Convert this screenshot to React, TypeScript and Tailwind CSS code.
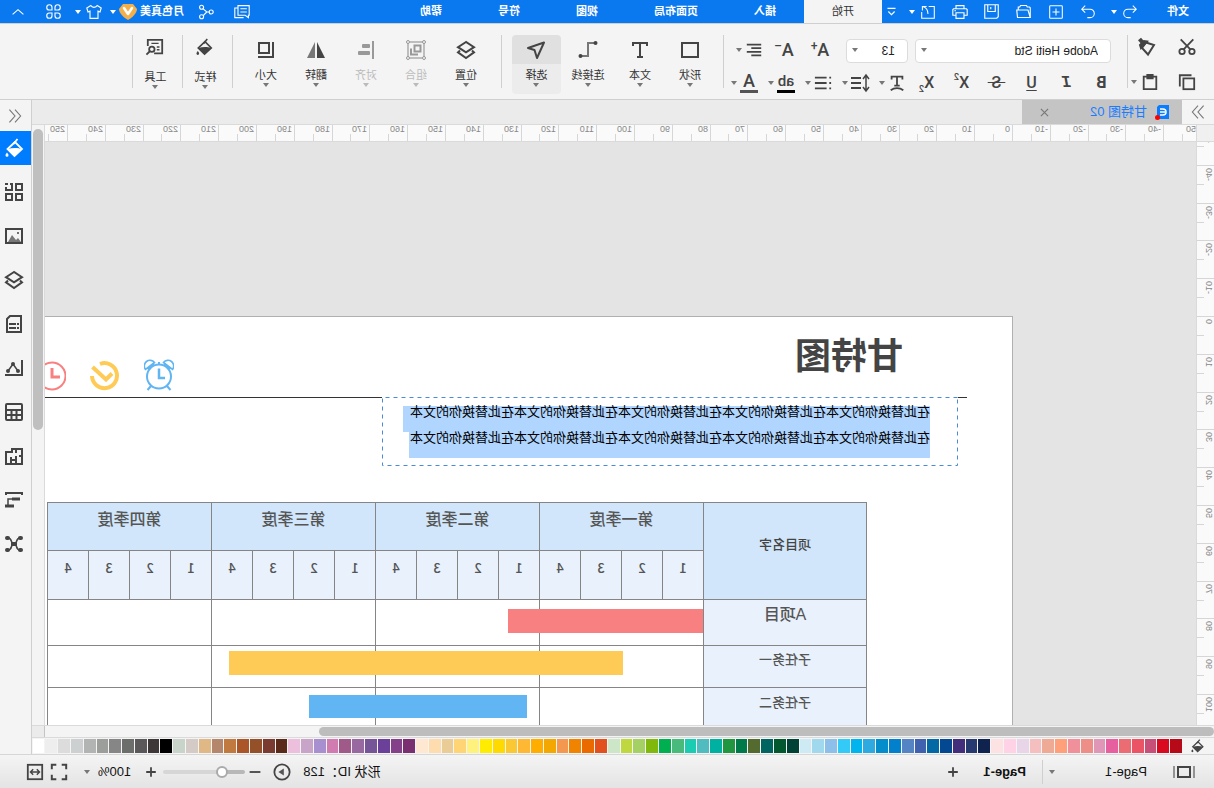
import type { ReactNode } from "react";

interface IconProps {
  size?: number;
  width?: number;
  className?: string;
  children?: ReactNode;
}

function Icon({ size = 20, width = 2, className = "", children }: IconProps) {
  return (
    <svg
      width={size}
      height={size}
      viewBox="0 0 20 20"
      fill="none"
      stroke="currentColor"
      strokeWidth={width}
      className={`shrink-0 ${className}`}
      aria-hidden="true"
    >
      {children}
    </svg>
  );
}

function Caret({ className = "text-[#777]" }: { className?: string }) {
  return (
    <svg width="6" height="4" viewBox="0 0 6 4" className={`shrink-0 ${className}`} aria-hidden="true">
      <path d="M0 0h6L3 4z" fill="currentColor" />
    </svg>
  );
}

function Divider() {
  return <div className="h-[53px] w-px shrink-0 bg-[#cfcfcf]" />;
}

function Bucket({ size = 20, className = "" }: { size?: number; className?: string }) {
  return (
    <Icon size={size} width={1.8} className={className}>
      <path d="M10 4 17.500 11 10.500 18 3 11z" />
      <path d="M3 11c4-1.500 10-1.500 14.500 0l-7 7z" fill="currentColor" stroke="none" />
      <path d="M11.500 6 7.500 1" />
      <path d="M18 14.500c1 1.400 1.500 2 1.500 2.800a1.500 1.500 0 0 1-3 0c0-.8.500-1.400 1.500-2.800z" fill="currentColor" stroke="none" />
    </Icon>
  );
}

function Layers({ size = 20 }: { size?: number }) {
  return (
    <Icon size={size}>
      <path d="M10 2 18 7.200l-8 5.200-8-5.200z" />
      <path d="M4 10.500 2 12.400 10 18l8-5.600-2-1.900" />
    </Icon>
  );
}

const MENU_TABS = ["开始", "插入", "页面布局", "视图", "符号", "帮助"];

function TitleBar() {
  const tool = "flex h-full w-8 items-center justify-center";
  return (
    <header className="flex h-6 shrink-0 border-b border-[#cfcfcf] bg-[#0a78ef] text-[11px] text-white">
      <button className="w-[68px] pl-[25px] text-left font-bold">文件</button>
      <button aria-label="撤销" className="flex w-[42px] items-center gap-[6px] pl-[9px]">
        <Icon size={14} width={1.5}>
          <path d="M6 1 1 6l5 5M1 6h12a6 6 0 0 1 0 12H9" />
        </Icon>
        <Caret className="text-white" />
      </button>
      <button aria-label="恢复" className={tool}>
        <Icon size={14} width={1.5}>
          <path d="M14 1l5 5-5 5M19 6H7a6 6 0 0 0 0 12h4" />
        </Icon>
      </button>
      <button aria-label="新建" className={tool}>
        <Icon size={14} width={1.5}>
          <rect x="1" y="1" width="18" height="18" rx="1" />
          <path d="M10 5v10M5 10h10" />
        </Icon>
      </button>
      <button aria-label="打开" className={tool}>
        <Icon size={15} width={1.5}>
          <path d="M1 18V5l1-1h3l1-2h8l1 2h2v4M1 18l3-10h15l-1 10z" />
        </Icon>
      </button>
      <button aria-label="保存" className={tool}>
        <Icon size={15} width={1.5}>
          <path d="M1 1h18v18H3l-2-2zM5 1v9h10V1M11 4v3" />
        </Icon>
      </button>
      <button aria-label="打印" className={tool}>
        <Icon size={16} width={1.4}>
          <path d="M5 6V2h10v4M5 14H1V7l1-1h16l1 1v7h-4M5 11h10v7H5zM15 8.500h2" />
        </Icon>
      </button>
      <button aria-label="导出" className="flex w-[42px] items-center gap-[6px] pl-[9px]">
        <Icon size={14} width={1.5}>
          <path d="M9 2H1v17h18v-9M12 2h6v6M18 2c-5 1-8 5-8 11" />
        </Icon>
        <Caret className="text-white" />
      </button>
      <button aria-label="自定义工具栏" className="flex w-5 items-center justify-center">
        <Icon size={9} width={2.5}>
          <path d="M1 3h18M3 10l7 7 7-7" />
        </Icon>
      </button>
      <nav className="flex">
        {MENU_TABS.map((tab, i) => (
          <button key={tab} className={i === 0 ? "bg-[#f4f4f4] px-7 text-[#333]" : "px-7 font-bold"}>
            {tab}
          </button>
        ))}
      </nav>
      <div className="ml-auto flex h-full">
        <button aria-label="反馈" className="flex w-9 items-center justify-center">
          <Icon size={16} width={1.4}>
            <path d="M1 2h14v12H6l-4 3v-3H1zM15 5h4v12H8M4 6h8M4 10h8" />
          </Icon>
        </button>
        <button aria-label="分享" className="flex w-9 items-center justify-center">
          <Icon size={16} width={1.4}>
            <circle cx="3.500" cy="10" r="2.500" />
            <circle cx="15.500" cy="4" r="2.500" />
            <circle cx="15.500" cy="16" r="2.500" />
            <path d="M6 10h3l4.500-4M9 10l4.500 4.500" />
          </Icon>
        </button>
        <button className="flex items-center gap-[3px] pl-1 font-bold">
          月色真美
          <svg width="18" height="17" viewBox="0 0 18 17" aria-hidden="true">
            <path d="M4 1h10l4 5c0 4-5 9-9 11C5 15 0 10 0 6z" fill="#f3b04a" />
            <path d="m5 5 4 6 4-6" fill="none" stroke="#fff" strokeWidth="2.500" strokeLinecap="round" strokeLinejoin="round" />
          </svg>
          <Caret className="text-white" />
        </button>
        <button aria-label="主题" className="flex items-center gap-[5px] pr-[3px] pl-2">
          <Icon size={16} width={1.4}>
            <path d="M6 2 1 5l1.500 5L5 9v9h10V9l2.500 1L19 5l-5-3c-1.500 3-6.500 3-8 0z" />
          </Icon>
          <Caret className="text-white" />
        </button>
        <button aria-label="应用" className="flex w-9 items-center justify-center">
          <Icon size={15} width={1.5}>
            <path d="M8 8H4.500A3.500 3.500 0 1 1 8 4.500zM12 8h3.500A3.500 3.500 0 1 0 12 4.500zM8 12H4.500A3.500 3.500 0 1 0 8 15.500zM12 12h3.500a3.500 3.500 0 1 1-3.500 3.500z" />
          </Icon>
        </button>
        <button aria-label="收起功能区" className="flex w-9 items-center justify-center">
          <Icon size={12} width={1.8}>
            <path d="m1 14 9-8 9 8" />
          </Icon>
        </button>
      </div>
    </header>
  );
}

interface BigButtonProps {
  label: string;
  className?: string;
  muted?: boolean;
  spread?: boolean;
  children: ReactNode;
}

function BigButton({ label, className = "w-[50px]", muted = false, spread = false, children }: BigButtonProps) {
  return (
    <button
      disabled={muted}
      className={`mt-[6px] flex h-[59px] shrink-0 flex-col items-center ${spread ? "gap-[13px] pt-[3px]" : "gap-[7px] pt-[5px]"} ${muted ? "text-[#999]" : "text-[#444]"} ${className}`}
    >
      {children}
      <span className="flex flex-col items-center">
        <span className={`text-[11px] leading-4 ${muted ? "text-[#bbb]" : "text-[#333]"}`}>{label}</span>
        <Caret className={muted ? "text-[#bbb]" : "text-[#777]"} />
      </span>
    </button>
  );
}

function CharButton({ label, children }: { label: string; children: ReactNode }) {
  return (
    <button
      aria-label={label}
      className="flex h-6 w-[35px] items-center justify-center font-['Roboto',sans-serif] text-base font-medium"
    >
      {children}
    </button>
  );
}

function DropButton({ label, children }: { label: string; children: ReactNode }) {
  return (
    <button aria-label={label} className="flex h-6 w-[37px] items-center">
      <span className="flex w-6 justify-center">{children}</span>
      <Caret />
    </button>
  );
}

function Ribbon() {
  const sizeButton = "flex w-9 justify-center font-['Roboto',sans-serif] text-lg leading-6 font-medium";
  return (
    <div className="flex h-[76px] shrink-0 items-center border-b border-[#cfcfcf] bg-[#f4f4f4] text-[#444]">
      <div className="mt-[6px] grid grid-cols-[54px_32px] gap-y-[11px]">
        <button aria-label="剪切" className="flex h-6 items-center justify-center">
          <Icon size={18}>
            <path d="M3 1.500 14 13M17 1.500 6 13" />
            <circle cx="4.500" cy="15" r="3" />
            <circle cx="15.500" cy="15" r="3" />
          </Icon>
        </button>
        <button aria-label="格式刷" className="flex h-6 items-center pl-[3px]">
          <Icon size={20}>
            <path d="m3 8 6 9.500 6-6.500-4-5.500z" />
            <path d="M10 4.500 16 11l1-3-4-4z" fill="currentColor" />
            <path d="m14 6 3.500-4" strokeWidth="4" />
          </Icon>
        </button>
        <button aria-label="复制" className="flex h-6 items-center justify-center">
          <Icon size={18}>
            <rect x="2" y="6" width="12" height="12" />
            <path d="M5 2.500h13V15" />
          </Icon>
        </button>
        <button aria-label="粘贴" className="flex h-6 items-center gap-1 pl-px">
          <Icon size={18}>
            <path d="M7 4H3v14h14V4h-4" />
            <path d="M7 2h6v4H7z" fill="currentColor" />
          </Icon>
          <Caret />
        </button>
      </div>
      <Divider />
      <div className="mt-[9px] ml-4 flex flex-col gap-2">
        <div className="flex items-center">
          <div className="relative mr-[7px] w-[196px]">
            <select
              aria-label="字体"
              className="h-6 w-full appearance-none rounded-sm border border-[#dcdcdc] bg-white px-3 text-xs text-[#222]"
            >
              <option>Adobe Heiti Std</option>
            </select>
            <span className="pointer-events-none absolute top-[10px] right-[6px] flex">
              <Caret />
            </span>
          </div>
          <div className="relative w-[62px]">
            <select
              aria-label="字号"
              className="h-6 w-full appearance-none rounded-sm border border-[#dcdcdc] bg-white px-3 text-xs text-[#222]"
            >
              <option>13</option>
            </select>
            <span className="pointer-events-none absolute top-[10px] right-[6px] flex">
              <Caret />
            </span>
          </div>
          <button aria-label="增大字号" className={`ml-2 ${sizeButton}`}>
            A<span className="text-xs leading-4">+</span>
          </button>
          <button aria-label="减小字号" className={sizeButton}>
            A<span className="text-xs leading-4">–</span>
          </button>
          <DropButton label="对齐方式">
            <Icon size={18} width={2}>
              <path d="M2 4h16M2 8h11M2 12h16M2 16h11" />
            </Icon>
          </DropButton>
        </div>
        <div className="-ml-2 flex items-center">
          <CharButton label="加粗">
            <span className="font-bold">B</span>
          </CharButton>
          <CharButton label="斜体">
            <span className="font-['Liberation_Mono'] font-bold italic">I</span>
          </CharButton>
          <CharButton label="下划线">
            <span className="underline underline-offset-2">U</span>
          </CharButton>
          <CharButton label="删除线">
            <span className="line-through">&nbsp;S&nbsp;</span>
          </CharButton>
          <CharButton label="上标">
            X<span className="self-start text-[9px] leading-3">2</span>
          </CharButton>
          <CharButton label="下标">
            X<span className="self-end text-[9px] leading-3">2</span>
          </CharButton>
          <DropButton label="文字样式">
            <Icon size={18}>
              <path d="M4 6V3h12v3M10 3v10M7 13h6" />
              <path d="M3 18c4-3 10-3 14 0" />
            </Icon>
          </DropButton>
          <DropButton label="行距">
            <Icon size={20}>
              <path d="M9 5h10M9 10h10M9 15h10" />
              <path d="M4 3v14M1 6l3-4 3 4M1 14l3 4 3-4" strokeWidth="1.500" />
            </Icon>
          </DropButton>
          <DropButton label="项目符号">
            <Icon size={18}>
              <path d="M6 4h13M6 10h13M6 16h13" />
              <path d="M1 4h2M1 10h2M1 16h2" />
            </Icon>
          </DropButton>
          <DropButton label="突出显示">
            <span className="h-[21px] w-[18px] border-b-[3px] border-black text-center font-['Roboto',sans-serif] text-[15px] leading-[18px] font-medium">
              ab
            </span>
          </DropButton>
          <DropButton label="字体颜色">
            <span className="h-[21px] w-[18px] border-b-[3px] border-[#555] text-center font-['Roboto',sans-serif] text-lg leading-[18px] font-medium">
              A
            </span>
          </DropButton>
        </div>
      </div>
      <Divider />
      <div className="ml-2 flex">
        <BigButton label="形状">
          <Icon>
            <rect x="2" y="3" width="16" height="14" />
          </Icon>
        </BigButton>
        <BigButton label="文本">
          <Icon>
            <path d="M3 6V3h14v3M10 3v15M7 17h6" />
          </Icon>
        </BigButton>
        <BigButton label="连接线" className="w-[54px]">
          <Icon>
            <path d="M2 3h8v13h6" stroke="#777" />
            <circle cx="2.500" cy="3" r="2" fill="currentColor" stroke="none" />
            <circle cx="17.500" cy="16" r="2" fill="currentColor" stroke="none" />
          </Icon>
        </BigButton>
        <BigButton
          label="选择"
          className="w-[49px] rounded-sm bg-linear-to-b from-[#e0e0e0] from-50% to-[#ececec] to-50%"
        >
          <Icon>
            <path d="m2 2.500 7 15.500 2.500-8L18 8z" strokeLinejoin="round" />
          </Icon>
        </BigButton>
      </div>
      <div className="ml-[10px]">
        <Divider />
      </div>
      <div className="ml-[10px] flex">
        <BigButton label="位置">
          <Layers />
        </BigButton>
        <BigButton label="组合" muted>
          <Icon width={1.2}>
            <rect x="2" y="2" width="16" height="16" />
            <g fill="#f4f4f4" strokeWidth="1">
              <circle cx="2" cy="2" r="1.500" />
              <circle cx="18" cy="2" r="1.500" />
              <circle cx="2" cy="18" r="1.500" />
              <circle cx="18" cy="18" r="1.500" />
            </g>
            <path d="M5.500 5.500h6v6h-6z" strokeWidth="2" />
            <path d="M14 9.500h1v5h-6v-1" strokeWidth="2" />
          </Icon>
        </BigButton>
        <BigButton label="对齐" muted>
          <Icon>
            <path d="M3 1v18" />
            <rect x="6" y="4" width="8" height="4" rx="1" fill="currentColor" stroke="none" />
            <rect x="6" y="11" width="12" height="4" rx="1" fill="currentColor" stroke="none" />
          </Icon>
        </BigButton>
        <BigButton label="翻转">
          <Icon>
            <path d="M9 2v16H1z" fill="currentColor" stroke="none" />
            <path d="M11 2v16h8z" fill="#777" stroke="none" />
          </Icon>
        </BigButton>
        <BigButton label="大小">
          <Icon>
            <rect x="7" y="3" width="10" height="10" />
            <path d="M3 2v15h15" />
          </Icon>
        </BigButton>
      </div>
      <div className="ml-2 flex items-center">
        <Divider />
        <BigButton label="样式" className="w-[49px] pl-1" spread>
          <Bucket size={18} />
        </BigButton>
        <Divider />
        <BigButton label="工具" className="w-[49px] pl-1" spread>
          <Icon size={18}>
            <path d="M18 9V2H2v15h9" />
            <path d="M6 6h8M5 10h3M5 13h3" strokeWidth="1.500" />
            <circle cx="13.500" cy="12.500" r="3" />
            <path d="m16 15 3.500 3.500" />
          </Icon>
        </BigButton>
        <Divider />
      </div>
    </div>
  );
}

// 10 mm on the rulers, in screen pixels
const STEP = 37.8;

function range(from: number, to: number) {
  return Array.from({ length: to - from + 1 }, (_, i) => from + i);
}

function TopRuler() {
  return (
    <div className="relative h-full flex-1 overflow-x-clip border-l border-[#dadada]">
      {range(-5, 25).map((n) => (
        <div
          key={n}
          className="absolute top-0 h-full border-l border-[#d6d6d6] pl-[2px] text-[9px] leading-[9px] text-[#888]"
          style={{ left: Math.round(183 + n * STEP) }}
        >
          {n * 10}
        </div>
      ))}
      {range(-5, 25).map((n) => (
        <div
          key={n}
          className="absolute bottom-0 h-[7px] w-px bg-[#d6d6d6]"
          style={{ left: Math.round(183 + (n + 0.5) * STEP) }}
        />
      ))}
    </div>
  );
}

function SideRuler() {
  return (
    <div className="relative w-[18px] shrink-0 overflow-y-clip border-r border-[#dadada] bg-[#fafafa]">
      {range(-5, 10).map((n) => (
        <div
          key={n}
          className="absolute left-0 flex w-full border-t border-[#d6d6d6] pt-[2px]"
          style={{ top: Math.round(174 + n * STEP) }}
        >
          <span className="rotate-180 text-[9px] leading-[11px] text-[#888] [writing-mode:vertical-rl]">
            {n * 10}
          </span>
        </div>
      ))}
      {range(-5, 10).map((n) => (
        <div
          key={n}
          className="absolute right-0 h-px w-[7px] bg-[#d6d6d6]"
          style={{ top: Math.round(174 + (n + 0.5) * STEP) }}
        />
      ))}
    </div>
  );
}

const SAMPLE = "在此替换你的文本".repeat(5);
const QUARTERS = ["第一季度", "第二季度", "第三季度", "第四季度"];
const WEEKS = ["1", "2", "3", "4"];
const TASKS = [
  { name: "A项目", row: "h-[46px]", text: "pt-[5px] text-base" },
  { name: "子任务一", row: "h-[42px]", text: "pt-1 text-[13px]" },
  { name: "子任务二", row: "h-[46px]", text: "pt-[5px] text-[13px]" },
];

function GanttTable() {
  const cell = "border border-[#858585] p-0 align-top";
  return (
    <table className="w-[820px] table-fixed border-collapse text-[#555]">
      <colgroup>
        <col className="w-[163px]" />
        {range(1, 16).map((n) => (
          <col key={n} />
        ))}
      </colgroup>
      <thead>
        <tr className="h-12 bg-[#d1e6fa]">
          <th rowSpan={2} className={`${cell} pt-8 text-[13px] leading-5 font-medium text-[#444]`}>
            项目名字
          </th>
          {QUARTERS.map((q) => (
            <th key={q} colSpan={4} className={`${cell} pt-[7px] text-base leading-5 font-medium`}>
              {q}
            </th>
          ))}
        </tr>
        <tr className="h-[49px] bg-[#e9f2fc]">
          {QUARTERS.map((q) =>
            WEEKS.map((w) => (
              <th key={q + w} className={`${cell} pt-[7px] font-['Noto_Sans_CJK_SC'] text-[13px] leading-5 font-medium`}>
                {w}
              </th>
            )),
          )}
        </tr>
      </thead>
      <tbody>
        {TASKS.map((task) => (
          <tr key={task.name} className={task.row}>
            <th className={`${cell} ${task.text} bg-[#e9f2fc] leading-5 font-medium`}>{task.name}</th>
            {QUARTERS.map((q) => (
              <td key={q} colSpan={4} className={cell} />
            ))}
          </tr>
        ))}
      </tbody>
    </table>
  );
}

function Clocks() {
  return (
    <div className="absolute top-[42px] left-[838px] flex gap-6">
      <svg width="30" height="32" viewBox="0 0 30 32" fill="none" stroke="#60b5f2" strokeWidth="2" className="shrink-0">
        <circle cx="15" cy="17.500" r="12" />
        <path d="M15 9.500v9.500H9" strokeWidth="2.500" />
        <path d="M1.500 10.500a5.500 5.500 0 0 1 9-7zM28.500 10.500a5.500 5.500 0 0 0-9-7z" strokeWidth="1.600" />
        <path d="M3.500 10 10 4.500M26.500 10 20 4.500M15 3v3M7 27l-3.500 4M23 27l3.500 4" />
      </svg>
      <svg width="30" height="32" viewBox="0 0 30 32" fill="none" stroke="#ffcb57" strokeWidth="4" className="shrink-0">
        <path d="M20 5a12.500 12.500 0 1 0 8 12" />
        <path d="M27.500 8 14 20.500l-6-6" />
      </svg>
      <svg width="30" height="32" viewBox="0 0 30 32" fill="none" stroke="#f88080" strokeWidth="2" className="shrink-0">
        <circle cx="14" cy="17" r="13.500" />
        <path d="M14 9v9H6" strokeWidth="3" />
      </svg>
    </div>
  );
}

function Canvas() {
  return (
    <div className="relative flex-1 overflow-hidden bg-[#e4e4e4]">
      <div className="absolute top-[174px] right-0 bottom-0 left-[183px] border-t border-l border-[#b0b0b0] bg-white">
        <h1 className="absolute top-5 left-[109px] text-4xl leading-10 font-bold whitespace-nowrap text-[#444]">
          甘特图
        </h1>
        <Clocks />
        <div className="absolute top-20 right-0 left-[45px] h-px bg-[#333]" />
        <div className="absolute top-20 left-[54px] h-[69px] w-[576px] bg-white pt-[9px] pl-7 text-[13px] leading-3 whitespace-nowrap text-black">
          <svg width="576" height="69" className="absolute top-0 left-0" fill="none" stroke="#4a8ad8">
            <rect x=".5" y=".5" width="575" height="68" strokeDasharray="4 4" />
          </svg>
          <p className="h-[26px] w-[527px] bg-[#b0d6ff]">{SAMPLE}</p>
          <p className="h-[26px] w-[521px] bg-[#b0d6ff]">{SAMPLE}</p>
        </div>
        <div className="absolute top-[185px] left-[145px]">
          <GanttTable />
          <div className="absolute top-[107px] left-[164px] h-6 w-[195px] bg-[#f88080]" />
          <div className="absolute top-[149px] left-[244px] h-6 w-[394px] bg-[#ffcb57]" />
          <div className="absolute top-[193px] left-[340px] h-[23px] w-[218px] bg-[#60b5f2]" />
        </div>
      </div>
    </div>
  );
}

const SWATCHES = [
  "#b60a18", "#d90a20", "#c75078", "#ea5465", "#ec6c74", "#e65f9f", "#e097b7", "#ee8e88", "#f0909a", "#ffa07a",
  "#eeaa94", "#f5bfbf", "#e9d5e8", "#ffd3e5", "#fde2e4", "#10234f", "#263a70", "#432e7c", "#054892", "#0369a4",
  "#4061ae", "#5484c4", "#0380cb", "#048dcb", "#2eaae0", "#00b4ee", "#33caf8", "#8cc0ea", "#a0d8ee", "#cdeaf5",
  "#004236", "#045830", "#006460", "#546a2e", "#007a48", "#209640", "#00b0a0", "#50bcc0", "#1cccb2", "#48ba7c",
  "#00b050", "#80b80e", "#a4d064", "#c0d840", "#cde6c8", "#e2501e", "#ea6a00", "#f08400", "#f49850", "#f2a800",
  "#ffae00", "#ffb834", "#fac832", "#ffda00", "#ffec00", "#fef27c", "#ffd474", "#eacc96", "#ffdcae", "#ffe8d2",
  "#7a3070", "#844088", "#6a4098", "#765498", "#9868a0", "#a05a8a", "#d07cb0", "#a890d0", "#c8a4c8", "#ecc0dc",
  "#5a2a1a", "#7a3c30", "#945028", "#aa5628", "#c07a40", "#b4866c", "#dfb886", "#d4cac6", "#c8d4ca", "#000000",
  "#3e3838", "#5a5858", "#6c6e6c", "#868686", "#9c9e9c", "#b2b4b4", "#ccd0d0", "#dcdcdc", "#eeeeee", "#ffffff",
];

function Palette() {
  return (
    <div className="flex h-4 shrink-0 items-center bg-[#f4f4f4]">
      <div className="flex w-8 justify-center text-[#444]">
        <Bucket size={14} />
      </div>
      <div className="flex h-[14px] flex-1 gap-px">
        {SWATCHES.map((color) => (
          <button key={color} aria-label={color} className="flex-1" style={{ backgroundColor: color }} />
        ))}
      </div>
    </div>
  );
}

function DocumentTabs() {
  return (
    <div className="flex h-[25px] shrink-0 border-b border-[#dadada] bg-[#ebebeb]">
      <button aria-label="展开左侧面板" className="flex w-8 items-center justify-center bg-[#f4f4f4] text-[#777]">
        <Icon size={14} width={1.6}>
          <path d="m2 1 8 9-8 9M10 1l8 9-8 9" />
        </Icon>
      </button>
      <div className="flex w-40 items-center bg-[#c4c4c4] pl-[13px]">
        <svg width="14" height="15" viewBox="0 0 14 15" className="shrink-0" aria-hidden="true">
          <path d="M0 0h10l2 2v12H0z" fill="#0a7cff" />
          <path d="M9 4H6a3 3 0 0 0 0 6h3M4 7h5" fill="none" stroke="#fff" strokeWidth="1.500" />
          <circle cx="11.500" cy="12.500" r="2.500" fill="#f00" />
        </svg>
        <span className="ml-2 text-[13px] whitespace-nowrap text-[#1a7dff]">甘特图 02</span>
        <button aria-label="关闭" className="mr-[18px] ml-auto text-[#777]">
          <Icon size={9} width={2.5}>
            <path d="m2 2 16 16M18 2 2 18" />
          </Icon>
        </button>
      </div>
    </div>
  );
}

const PANELS: { label: string; icon: ReactNode }[] = [
  {
    label: "符号库",
    icon: (
      <Icon>
        <path d="M2 2h6v6H2zM2 12h6v6H2zM12 12h6v6h-6z" />
        <path d="M12 2v6h6V5M11 2h3M16 2h3" />
      </Icon>
    ),
  },
  {
    label: "图片",
    icon: (
      <Icon>
        <rect x="2" y="3" width="16" height="14" />
        <path d="m3 16 3-4 2 2 4-5 4 7z" fill="#777" stroke="none" />
        <circle cx="6" cy="7" r="1" fill="currentColor" stroke="none" />
      </Icon>
    ),
  },
  { label: "图层", icon: <Layers /> },
  {
    label: "页面属性",
    icon: (
      <Icon>
        <path d="M3 2h11l3 3v13H3z" />
        <path d="M5 10h2M8 10h7M5 14h2M8 14h7" strokeWidth="1.800" />
      </Icon>
    ),
  },
  {
    label: "图表",
    icon: (
      <Icon>
        <path d="M2 2v15h17" />
        <path d="m6 13 5-7 5 7" strokeWidth="1.500" />
        <g fill="currentColor" stroke="none">
          <circle cx="6" cy="13" r="2" />
          <circle cx="11" cy="6" r="2" />
          <circle cx="16" cy="13" r="2" />
        </g>
      </Icon>
    ),
  },
  {
    label: "表格",
    icon: (
      <Icon>
        <rect x="2" y="2" width="16" height="16" rx="1" />
        <path d="M2 8h16M2 13h16M7.500 8v10M12.500 8v10" />
      </Icon>
    ),
  },
  {
    label: "平面图",
    icon: (
      <Icon>
        <path d="M2 3h10v3h6v12H2zM2 10h3M8 3v4M8 10v4h5v-3M13 18v-4M8 18v-4" />
      </Icon>
    ),
  },
  {
    label: "甘特图",
    icon: (
      <Icon>
        <path d="M2 5V3h16v2" />
        <path d="M4 9h8" strokeWidth="3" />
        <path d="M12 9h4v6" strokeWidth="1.500" />
        <path d="M10 16h9" strokeWidth="3" />
      </Icon>
    ),
  },
  {
    label: "思维导图",
    icon: (
      <Icon>
        <path d="M4 4c5 0 2 6 6 6s1-6 6-6M4 16c5 0 2-6 6-6s1 6 6 6" strokeWidth="1.500" />
        <g fill="currentColor" stroke="none">
          <rect x="1" y="2" width="5" height="4" rx="2" />
          <rect x="14" y="2" width="5" height="4" rx="2" />
          <rect x="1" y="14" width="5" height="4" rx="2" />
          <rect x="14" y="14" width="5" height="4" rx="2" />
          <rect x="7" y="8" width="6" height="4" rx="1" />
        </g>
      </Icon>
    ),
  },
];

function SidePanel() {
  return (
    <aside className="flex w-8 shrink-0 flex-col border-l border-[#cfcfcf] bg-[#f4f4f4] text-[#444]">
      <button aria-label="收起面板" className="flex h-[31px] items-center justify-center text-[#777]">
        <Icon size={14} width={1.6}>
          <path d="m10 1-8 9 8 9M18 1l-8 9 8 9" />
        </Icon>
      </button>
      <button aria-label="填充" className="flex h-[34px] items-center justify-center bg-[#007dff] text-white">
        <Bucket />
      </button>
      <div className="mt-[5px] flex flex-col">
        {PANELS.map((panel) => (
          <button key={panel.label} aria-label={panel.label} className="flex h-11 items-center justify-center pl-[2px]">
            {panel.icon}
          </button>
        ))}
      </div>
    </aside>
  );
}

function StatusBar() {
  return (
    <footer className="flex h-[34px] shrink-0 items-center border-t border-[#d6d6d6] bg-linear-to-b from-[#f4f4f4] to-[#e4e4e4] text-[13px] text-[#111]">
      <button aria-label="页面视图" className="ml-[19px] text-[#444]">
        <svg width="22" height="14" viewBox="0 0 22 14" fill="none" stroke="currentColor" strokeWidth="2">
          <path d="M1 1v12M21 1v12" stroke="#777" strokeWidth="1.500" />
          <rect x="5" y="2" width="12" height="10" />
        </svg>
      </button>
      <button className="ml-[26px] flex w-[98px] items-center justify-between">
        Page-1
        <Caret />
      </button>
      <div className="ml-[6px] h-6 w-px bg-[#cfcfcf]" />
      <button className="ml-4 font-bold">Page-1</button>
      <button aria-label="添加页面" className="ml-6 text-[#444]">
        <Icon size={12} width={3}>
          <path d="M10 2v16M2 10h16" />
        </Icon>
      </button>
      <div className="ml-auto flex items-center text-[#444]">
        <span className="text-[#111]">形状 ID：128</span>
        <button aria-label="演示" className="ml-3">
          <Icon size={18}>
            <circle cx="10" cy="10" r="8.500" />
            <path d="m8 6 6 4-6 4z" fill="#555" stroke="none" />
          </Icon>
        </button>
        <button aria-label="缩小" className="ml-3">
          <Icon size={12} width={3}>
            <path d="M1 10h18" />
          </Icon>
        </button>
        <input
          type="range"
          aria-label="缩放"
          defaultValue={24}
          className="ml-1 h-1 w-[82px] appearance-none rounded-full bg-linear-to-r from-[#b8b8b8] from-25% to-[#d6d6d6] to-25% [&::-webkit-slider-thumb]:size-3 [&::-webkit-slider-thumb]:appearance-none [&::-webkit-slider-thumb]:rounded-full [&::-webkit-slider-thumb]:border-2 [&::-webkit-slider-thumb]:border-[#aaa] [&::-webkit-slider-thumb]:bg-white"
        />
        <button aria-label="放大" className="ml-[6px]">
          <Icon size={12} width={3}>
            <path d="M10 2v16M2 10h16" />
          </Icon>
        </button>
        <button className="ml-[14px] flex items-center gap-2 text-[#111]">
          100%
          <Caret />
        </button>
        <button aria-label="全屏" className="ml-4">
          <Icon size={18}>
            <path d="M2 7V2h5M13 2h5v5M18 13v5h-5M7 18H2v-5" strokeWidth="2.200" />
          </Icon>
        </button>
        <button aria-label="适应窗口" className="mr-[26px] ml-[6px]">
          <Icon size={18}>
            <rect x="2" y="2" width="16" height="16" />
            <path d="M5 10h10M8 7l-3 3 3 3M12 7l3 3-3 3" strokeWidth="1.600" />
          </Icon>
        </button>
      </div>
    </footer>
  );
}

export default function App() {
  return (
    <div className="flex h-screen -scale-x-100 flex-col overflow-hidden bg-[#f4f4f4] font-['Liberation_Sans','Noto_Sans_CJK_SC',sans-serif]">
      <TitleBar />
      <Ribbon />
      <div className="flex min-h-0 flex-1">
        <main className="flex min-w-0 flex-1 flex-col">
          <DocumentTabs />
          <div className="flex min-h-0 flex-1">
            <div className="flex min-w-0 flex-1 flex-col">
              <div className="flex h-[17px] shrink-0 border-b border-[#dadada] bg-[#fafafa]">
                <div className="w-[17px] shrink-0 bg-[#f0f0f0]" />
                <TopRuler />
              </div>
              <div className="flex min-h-0 flex-1">
                <SideRuler />
                <Canvas />
              </div>
            </div>
            <div className="w-[13px] shrink-0 border-l border-[#dadada] px-px pt-1">
              <div className="h-[301px] rounded-full bg-[#bfbfbf]" />
            </div>
          </div>
          <div className="flex h-[13px] shrink-0 border-y border-[#dadada]">
            <div className="flex flex-1 items-center pr-[274px]">
              <div className="h-[9px] flex-1 rounded-full bg-[#bdbdbd]" />
            </div>
            <div className="w-[13px] border-l border-[#c4c4c4] bg-[#ebebeb]" />
          </div>
          <Palette />
        </main>
        <SidePanel />
      </div>
      <StatusBar />
    </div>
  );
}
